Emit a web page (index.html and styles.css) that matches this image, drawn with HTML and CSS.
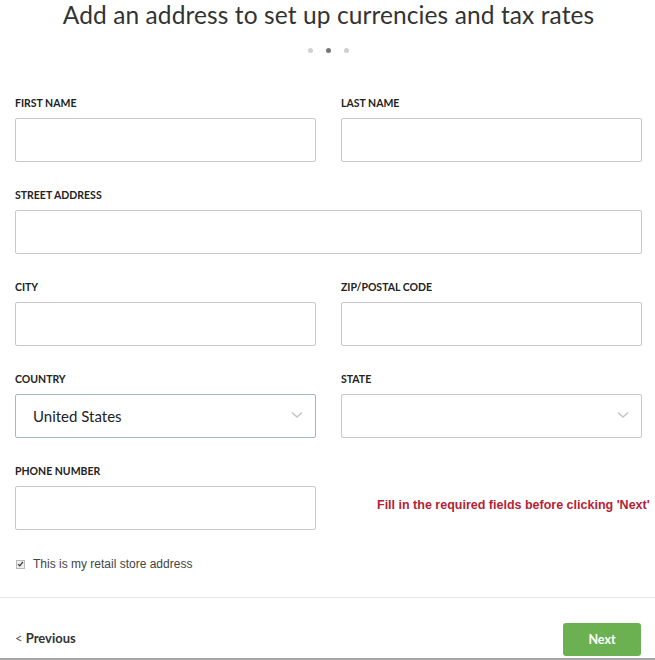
FILE: index.html
```html
<!DOCTYPE html>
<html>
<head>
<meta charset="utf-8">
<link rel="stylesheet" href="styles.css">
</head>
<body>
<div class="page">
  <h1 class="title">Add an address to set up currencies and tax rates</h1>
  <div class="dots"><span class="dot"></span><span class="dot active"></span><span class="dot"></span></div>
  <div class="form">
    <div class="field">
      <div class="label">FIRST NAME</div>
      <div class="input"></div>
    </div>
    <div class="field">
      <div class="label">LAST NAME</div>
      <div class="input"></div>
    </div>
    <div class="field wide">
      <div class="label">STREET ADDRESS</div>
      <div class="input"></div>
    </div>
    <div class="field">
      <div class="label">CITY</div>
      <div class="input"></div>
    </div>
    <div class="field">
      <div class="label">ZIP/POSTAL CODE</div>
      <div class="input"></div>
    </div>
    <div class="field">
      <div class="label">COUNTRY</div>
      <div class="input select focused"><span class="value">United States</span><svg class="chev" width="12" height="8" viewBox="0 0 12 8"><path d="M1 1.5 L6 6 L11 1.5" fill="none" stroke="#c4c4c4" stroke-width="1.4"/></svg></div>
    </div>
    <div class="field">
      <div class="label">STATE</div>
      <div class="input select"><span class="value"></span><svg class="chev" width="12" height="8" viewBox="0 0 12 8"><path d="M1 1.5 L6 6 L11 1.5" fill="none" stroke="#c4c4c4" stroke-width="1.4"/></svg></div>
    </div>
    <div class="field">
      <div class="label">PHONE NUMBER</div>
      <div class="input"></div>
    </div>
    <div class="error-cell">
      <span class="error">Fill in the required fields before clicking 'Next'</span>
    </div>
  </div>
  <label class="check"><span class="box"><svg width="8" height="8" viewBox="0 0 8 8"><path d="M1.2 4.2 L3.2 6.2 L6.8 1.6" fill="none" stroke="#333" stroke-width="1.4"/></svg></span>This is my retail store address</label>
  <div class="footer">
    <span class="prev"><span class="lt">&lt;</span> Previous</span>
    <span class="next">Next</span>
  </div>
</div>
</body>
</html>
```
FILE: styles.css
```css
* { box-sizing: border-box; }
html, body { margin: 0; padding: 0; background: #fff; }
body { font-family: Lato, "Open Sans", sans-serif; color: #333; }
.page { width: 655px; height: 660px; overflow: hidden; border-bottom: 2px solid #a8a8a8; display: flex; flex-direction: column; }
.title {
  margin: 0;
  font-size: 24.5px;
  line-height: 30px;
  font-weight: 400;
  text-align: center;
  color: #333;
  letter-spacing: 0.1px;
  padding-left: 2px;
}
.dots { display: flex; justify-content: center; gap: 13px; margin-top: 18px; padding-left: 2px; }
.dot { width: 5px; height: 5px; border-radius: 50%; background: #d0d0d0; }
.dot.active { background: #777; }
.form {
  display: grid;
  grid-template-columns: 301px 301px;
  column-gap: 25px;
  row-gap: 26px;
  padding: 0 14px 0 15px;
  margin-top: 43px;
}
.field { display: flex; flex-direction: column; }
.field.wide { grid-column: 1 / span 2; }
.label {
  font-size: 10.5px;
  font-weight: 700;
  line-height: 14px;
  height: 14px;
  margin-bottom: 8px;
  color: #222;
}
.input {
  height: 44px;
  border: 1px solid #c8c8c8;
  border-radius: 2px;
  background: #fff;
}
.select { display: flex; align-items: center; justify-content: space-between; padding: 0 12px 0 17px; }
.select.focused { border-color: #a3baba; }
.value { font-size: 15px; color: #222; }
.chev { display: block; margin-top: -2px; }
.error-cell { display: flex; align-items: center; padding-top: 16px; padding-left: 36px; }
.error {
  font-family: "Liberation Sans", Arial, sans-serif;
  font-weight: 700;
  font-size: 12.5px;
  color: #b52233;
  white-space: nowrap;
}
.check {
  display: flex;
  align-items: center;
  gap: 8px;
  margin-top: 27px;
  padding-left: 16px;
  font-family: "Liberation Sans", Arial, sans-serif;
  font-size: 12px;
  color: #444;
  height: 14px;
}
.box {
  width: 9px; height: 9px;
  border: 1px solid #b8b8b8;
  background: #eee;
  display: flex; align-items: center; justify-content: center;
}
.box svg { display: block; }
.footer {
  margin-top: 26px;
  border-top: 1px solid #e8e8e8;
  flex: 1;
  display: flex;
  align-items: flex-end;
  justify-content: space-between;
  padding: 0 14px 2px 15px;
}
.prev { font-size: 13px; font-weight: 700; color: #333; margin-bottom: 10px; }
.lt { font-weight: 400; color: #555; }
.next {
  width: 78px; height: 33px;
  background: #6bb152;
  border-radius: 3px;
  color: #fff;
  font-size: 12.5px;
  font-weight: 700;
  display: flex; align-items: center; justify-content: center;
}
```
